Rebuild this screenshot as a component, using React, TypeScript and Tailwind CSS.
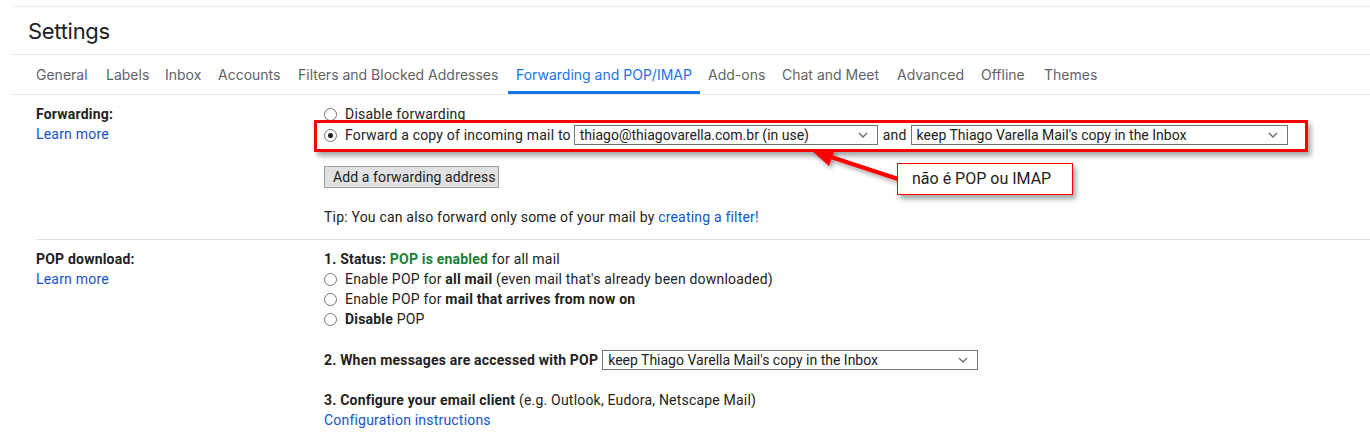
import React from "react";

const Chevron = () => (
  <svg width="10" height="6" viewBox="0 0 10 6" className="shrink-0">
    <polyline points="1,1 5,5 9,1" fill="none" stroke="#6b6b6b" strokeWidth="1.3" />
  </svg>
);

const Select = ({ w, text }: { w: string; text: string }) => (
  <div className={`${w} h-[20px] border border-[#767676] bg-white flex items-center justify-between pl-[5px] pr-[9px] shrink-0`}>
    <span className="text-[#202124] whitespace-nowrap leading-none tracking-normal">{text}</span>
    <Chevron />
  </div>
);

const Radio = ({ checked = false }: { checked?: boolean }) => (
  <span className="w-[13px] h-[13px] rounded-full border border-[#767676] bg-white flex items-center justify-center shrink-0 mr-[8px]">
    {checked && <span className="w-[5px] h-[5px] rounded-full bg-[#202124]" />}
  </span>
);

const tabs: { label: string; w: string; active?: boolean }[] = [
  { label: "General", w: "w-[70px]" },
  { label: "Labels", w: "w-[59px]" },
  { label: "Inbox", w: "w-[53px]" },
  { label: "Accounts", w: "w-[80px]" },
  { label: "Filters and Blocked Addresses", w: "w-[218px]" },
  { label: "Forwarding and POP/IMAP", w: "w-[192px]", active: true },
  { label: "Add-ons", w: "w-[74px]" },
  { label: "Chat and Meet", w: "w-[115px]" },
  { label: "Advanced", w: "w-[84px]" },
  { label: "Offline", w: "w-[63px]" },
  { label: "Themes", w: "w-[70px]" },
];

export default function App() {
  return (
    <div className="relative w-[1370px] h-[432px] overflow-hidden bg-white text-[14px] text-[#222222] font-['Roboto',sans-serif]">
      <div className="h-[6px]" />
      <div className="ml-[12px] border-t border-[#eceef0]">
        <div className="h-[47px] flex items-center pl-[16px] pt-[1px]">
          <h1 className="text-[22px] text-[#202124] font-['Inter',sans-serif] tracking-[-0.3px] leading-none">Settings</h1>
        </div>
        <div className="border-t border-b border-[#e8eaed] h-[41px] flex pl-[16px]">
          {tabs.map((t) => (
            <div
              key={t.label}
              className={`${t.w} shrink-0 pl-[8px] flex items-center whitespace-nowrap text-[14px] font-['Inter',sans-serif] ${
                t.active ? "text-[#1a73e8] border-b-[3px] border-[#1a73e8] pt-[2px]" : "text-[#5f6368] pb-[1px]"
              }`}
            >
              {t.label}
            </div>
          ))}
        </div>
      </div>

      <div className="ml-[36px] tracking-[0.2px]">
        {/* Forwarding */}
        <div className="flex pt-[9px] pb-[12px] border-b border-[#e0e0e0]">
          <div className="w-[288px] shrink-0 leading-[20px]">
            <div className="font-bold">Forwarding:</div>
            <div className="text-[#15c]">Learn more</div>
          </div>
          <div className="leading-[20px]">
            <div className="flex items-center h-[20px]">
              <Radio />
              <span>Disable forwarding</span>
            </div>
            <div className="flex items-center h-[22px]">
              <Radio checked />
              <span className="whitespace-nowrap">Forward a copy of incoming mail to</span>
              <div className="ml-[3px]">
                <Select w="w-[304px]" text="thiago@thiagovarella.com.br (in use)" />
              </div>
              <span className="ml-[5px] mr-[4px]">and</span>
              <Select w="w-[377px]" text="keep Thiago Varella Mail's copy in the Inbox" />
            </div>
            <div className="mt-[20px]">
              <button className="h-[22px] w-[175px] bg-[#e1e1e1] border border-[#a0a0a0] text-left pl-[8px] text-[#222222] leading-none tracking-[0.1px]">
                Add a forwarding address
              </button>
            </div>
            <div className="mt-[19px]">
              Tip: You can also forward only some of your mail by <span className="text-[#15c]">creating a filter!</span>
            </div>
          </div>
        </div>

        {/* POP */}
        <div className="flex pt-[9px]">
          <div className="w-[288px] shrink-0 leading-[20px]">
            <div className="font-bold">POP download:</div>
            <div className="text-[#15c]">Learn more</div>
          </div>
          <div className="leading-[20px]">
            <div>
              <span className="font-bold">1. Status: </span>
              <span className="font-bold text-[#188038]">POP is enabled</span> for all mail
            </div>
            <div className="flex items-center h-[20px]">
              <Radio />
              <span>
                Enable POP for <b>all mail</b> (even mail that's already been downloaded)
              </span>
            </div>
            <div className="flex items-center h-[20px]">
              <Radio />
              <span>
                Enable POP for <b>mail that arrives from now on</b>
              </span>
            </div>
            <div className="flex items-center h-[20px]">
              <Radio />
              <span>
                <b>Disable</b> POP
              </span>
            </div>
            <div className="flex items-center h-[20px] mt-[21px]">
              <span className="font-bold whitespace-nowrap">2. When messages are accessed with POP</span>
              <div className="ml-[4px]">
                <Select w="w-[376px]" text="keep Thiago Varella Mail's copy in the Inbox" />
              </div>
            </div>
            <div className="mt-[20px]">
              <b>3. Configure your email client</b> (e.g. Outlook, Eudora, Netscape Mail)
            </div>
            <div className="text-[#15c]">Configuration instructions</div>
          </div>
        </div>
      </div>

      {/* Annotations */}
      <div className="absolute left-[314px] top-[120px] w-[994px] h-[32px] border-[3px] border-[#ff0000] shadow-[3px_4px_5px_rgba(0,0,0,0.35)]" />
      <svg className="absolute left-0 top-0" width="1370" height="432" viewBox="0 0 1370 432">
        <defs>
          <filter id="sh" x="-20%" y="-20%" width="140%" height="160%">
            <feDropShadow dx="2" dy="3" stdDeviation="2" floodColor="#000" floodOpacity="0.35" />
          </filter>
        </defs>
        <g filter="url(#sh)">
          <line x1="898" y1="179" x2="828" y2="156" stroke="#ff0000" strokeWidth="4" />
          <polygon points="811,150 835,149 829,166" fill="#ff0000" />
        </g>
      </svg>
      <div className="absolute left-[897px] top-[163px] w-[176px] h-[32px] bg-white border border-[#ff0000] shadow-[3px_4px_5px_rgba(0,0,0,0.35)] flex items-center pl-[14px]">
        <span className="text-[16px] text-[#222222] font-['Roboto',sans-serif]">não é POP ou IMAP</span>
      </div>
    </div>
  );
}
